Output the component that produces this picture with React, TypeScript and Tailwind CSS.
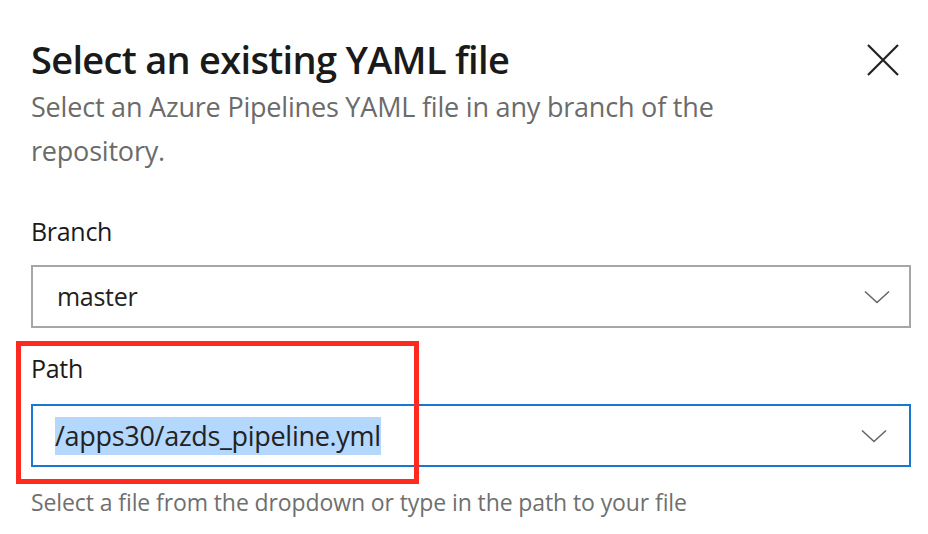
import React from "react";

const font = { fontFamily: '"Open Sans", "Noto Sans", Arial, sans-serif' };

function Chevron() {
  return (
    <svg width="26" height="14" viewBox="0 0 26 14" fill="none" className="shrink-0">
      <path d="M1 1.5 L13 12.5 L25 1.5" stroke="#666666" strokeWidth="1.6" />
    </svg>
  );
}

function CloseIcon() {
  return (
    <svg width="32" height="32" viewBox="0 0 32 32" fill="none">
      <path d="M1 1 L31 31 M31 1 L1 31" stroke="#222222" strokeWidth="2.2" />
    </svg>
  );
}

export default function App() {
  return (
    <div
      className="w-[928px] h-[534px] bg-white overflow-hidden pl-[31px] pr-[18px] text-[#1b1b1b]"
      style={font}
    >
      {/* header */}
      <div className="flex items-start justify-between pt-[33px]">
        <h1 className="text-[38px] leading-[52px] font-semibold tracking-[-0.7px] text-[#1a1a1a]">
          Select an existing YAML file
        </h1>
        <button className="mt-[11px] mr-[11px]">
          <CloseIcon />
        </button>
      </div>
      <p className="text-[27px] leading-[44px] text-[#6b6b6b] w-[760px] tracking-[-0.2px]">
        Select an Azure Pipelines YAML file in any branch of the repository.
      </p>

      {/* branch */}
      <div className="mt-[40px]">
        <label className="block text-[25px] leading-[36px] tracking-[-0.3px]">Branch</label>
        <div className="mt-[16px] w-[880px] h-[63px] border-2 border-[#a6a6a6] flex items-center justify-between pl-[24px] pr-[19px]">
          <span className="text-[25px] text-[#222] tracking-[-0.3px]">master</span>
          <Chevron />
        </div>
      </div>

      {/* path */}
      <div className="relative mt-[22px]">
        <div className="absolute left-[-15px] top-[-9px] w-[403px] h-[143px] border-[5px] border-[#ff2a1f] pointer-events-none" />
        <label className="block text-[25px] leading-[36px] tracking-[-0.3px]">Path</label>
        <div className="mt-[18px] w-[880px] h-[63px] border-2 border-[#1976d2] flex items-center justify-between pl-[22px] pr-[22px]">
          <span className="text-[27px] leading-[38px] bg-[#b3d7fd] text-[#222] tracking-[-0.3px]">
            /apps30/azds_pipeline.yml
          </span>
          <Chevron />
        </div>
      </div>

      <p className="mt-[20px] text-[23px] leading-[30px] text-[#6f6f6f] tracking-[-0.1px]">
        Select a file from the dropdown or type in the path to your file
      </p>
    </div>
  );
}
